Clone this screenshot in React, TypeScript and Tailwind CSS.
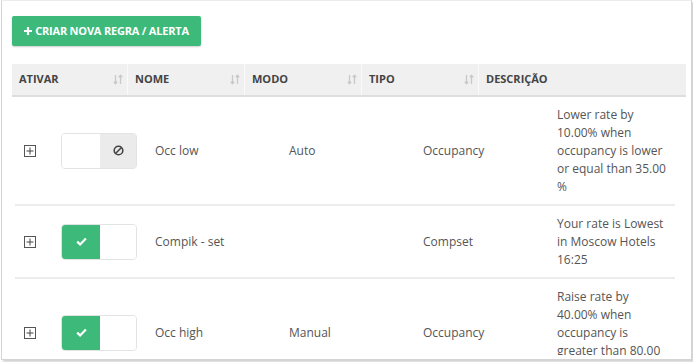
import React from "react";

const GREEN = "bg-[#3dba7a]";

const SortIcon = () => (
  <svg width="10" height="11" viewBox="0 0 10 11" className="shrink-0">
    <g stroke="#c8c8c8" strokeWidth="1.3" fill="none">
      <path d="M2.5 1v8.5M0.8 7.8l1.7 1.9 1.7-1.9" />
      <path d="M7.5 10V1.5M5.8 3.2l1.7-1.9 1.7 1.9" />
    </g>
  </svg>
);

const ExpandIcon = () => (
  <div className="w-[12px] h-[12px] border border-[#555] flex items-center justify-center">
    <svg width="8" height="8" viewBox="0 0 8 8">
      <path d="M4 0.5v7M0.5 4h7" stroke="#444" strokeWidth="1" />
    </svg>
  </div>
);

const Toggle = ({ on }: { on: boolean }) => (
  <div className="w-[76px] h-[36px] rounded-[4px] border border-[#e3e3e3] flex overflow-hidden">
    {on ? (
      <>
        <div className={`w-[38px] h-full ${GREEN} flex items-center justify-center`}>
          <svg width="11" height="9" viewBox="0 0 11 9">
            <path d="M1.2 4.6l2.9 2.8 5.8-6" stroke="#fff" strokeWidth="2.2" fill="none" />
          </svg>
        </div>
        <div className="flex-1 bg-white" />
      </>
    ) : (
      <>
        <div className="w-[38px] h-full bg-white" />
        <div className="flex-1 bg-[#ebebeb] flex items-center justify-center">
          <svg width="11" height="11" viewBox="0 0 11 11">
            <circle cx="5.5" cy="5.5" r="4.3" stroke="#444" strokeWidth="1.6" fill="none" />
            <path d="M2.5 8.5l6-6" stroke="#444" strokeWidth="1.6" />
          </svg>
        </div>
      </>
    )}
  </div>
);

const headers = [
  { label: "ATIVAR", w: "w-[116px]", sort: true },
  { label: "NOME", w: "w-[117px]", sort: true },
  { label: "MODO", w: "w-[117px]", sort: true },
  { label: "TIPO", w: "w-[117px]", sort: true },
  { label: "DESCRIÇÃO", w: "flex-1", sort: false },
];

const rows = [
  {
    on: false,
    name: "Occ low",
    mode: "Auto",
    type: "Occupancy",
    desc: "Lower rate by 10.00% when occupancy is lower or equal than 35.00 %",
  },
  {
    on: true,
    name: "Compik - set",
    mode: "",
    type: "Compset",
    desc: "Your rate is Lowest in Moscow Hotels 16:25",
  },
  {
    on: true,
    name: "Occ high",
    mode: "Manual",
    type: "Occupancy",
    desc: "Raise rate by 40.00% when occupancy is greater than 80.00 %",
  },
];

export default function App() {
  return (
    <div className="w-[693px] h-[362px] bg-white font-['Open_Sans',sans-serif]">
      <div className="ml-px w-[691px] h-[360px] border border-[#d4d4d4] border-t-[#ececec] shadow-[2px_2px_2px_rgba(0,0,0,0.18)] overflow-hidden pl-[10px] pt-[15px]">
        <button
          className={`h-[30px] w-[189px] ${GREEN} rounded-[2px] shadow-[0_1px_2px_rgba(0,0,0,0.2)] flex items-center justify-center gap-[3px] text-white text-[11px] font-bold tracking-[-0.2px]`}
        >
          <svg width="8" height="8" viewBox="0 0 8 8">
            <path d="M4 0v8M0 4h8" stroke="#fff" strokeWidth="2.2" />
          </svg>
          CRIAR NOVA REGRA / ALERTA
        </button>

        <div className="mt-[18px] w-[674px] h-[33px] bg-[#f0f0f0] border-b-2 border-[#dedede] flex text-[11px] font-bold text-[#444]">
          {headers.map((h, i) => (
            <div
              key={h.label}
              className={`${h.w} h-full flex items-center justify-between pl-[7px] pr-[4px] ${
                i < headers.length - 1 ? "border-r border-[#fafafa]" : ""
              }`}
            >
              <span>{h.label}</span>
              {h.sort && <SortIcon />}
            </div>
          ))}
        </div>

        <div className="ml-[3px] w-[660px] h-[258px] overflow-hidden text-[12px] text-[#555]">
          {rows.map((r) => (
            <div key={r.name} className="flex items-center border-b-2 border-[#ececec]">
              <div className="w-[33px] pl-[9px] shrink-0">
                <ExpandIcon />
              </div>
              <div className="w-[99px] pl-[13px] shrink-0">
                <Toggle on={r.on} />
              </div>
              <div className="w-[134px] pl-[8px] shrink-0">{r.name}</div>
              <div className="w-[134px] pl-[8px] shrink-0">{r.mode}</div>
              <div className="w-[134px] pl-[8px] shrink-0">{r.type}</div>
              <div className="flex-1 pl-[8px] pt-[9px] pb-[8px] leading-[18px]">
                <div className="w-[113px]">{r.desc}</div>
              </div>
            </div>
          ))}
        </div>
      </div>
    </div>
  );
}
